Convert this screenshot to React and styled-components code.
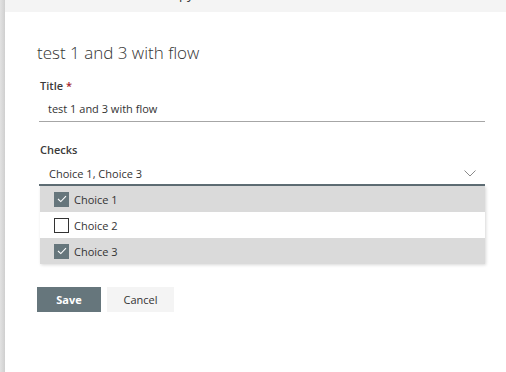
import React from "react"
import styled, { createGlobalStyle } from "styled-components"

const GlobalStyle = createGlobalStyle`
  html, body {
    margin: 0;
    padding: 0;
    background: #e6e6e6;
  }
  body {
    font-family: "Open Sans", "Noto Sans", sans-serif;
    color: #333333;
  }
`

const choices = [
  { label: "Choice 1", checked: true },
  { label: "Choice 2", checked: false },
  { label: "Choice 3", checked: true },
]

export default function App() {
  return (
    <>
      <GlobalStyle />
      <Page>
        <Edge />
        <Panel>
          <Toolbar>
            <ToolItem>Copy link</ToolItem>
          </Toolbar>
          <Body>
            <Heading>test 1 and 3 with flow</Heading>

            <Field>
              <Label>
                Title <Required>*</Required>
              </Label>
              <TextInput>test 1 and 3 with flow</TextInput>
            </Field>

            <Field>
              <Label>Checks</Label>
              <Dropdown>
                <span>Choice 1, Choice 3</span>
                <svg width="12" height="7" viewBox="0 0 12 7">
                  <path d="M0.5 0.5 L6 6 L11.5 0.5" fill="none" stroke="#8a8a8a" strokeWidth="1" />
                </svg>
              </Dropdown>
              <List>
                {choices.map((c) => (
                  <Option key={c.label} selected={c.checked}>
                    <Box checked={c.checked}>
                      {c.checked && (
                        <svg width="10" height="8" viewBox="0 0 10 8">
                          <path d="M1 4 L3.8 6.6 L9 1.2" fill="none" stroke="#ffffff" strokeWidth="1.1" />
                        </svg>
                      )}
                    </Box>
                    {c.label}
                  </Option>
                ))}
              </List>
            </Field>

            <Actions>
              <SaveButton>Save</SaveButton>
              <CancelButton>Cancel</CancelButton>
            </Actions>
          </Body>
        </Panel>
      </Page>
    </>
  )
}

const Page = styled.div`
  display: flex;
  width: 506px;
  height: 372px;
  overflow: hidden;
`

const Edge = styled.div`
  width: 5px;
  flex: none;
  background: linear-gradient(to right, #e2e2e2, #cfcfcf);
`

const Panel = styled.div`
  flex: 1;
  background: #ffffff;
  display: flex;
  flex-direction: column;
`

const Toolbar = styled.div`
  height: 12px;
  background: #f4f4f4;
  overflow: hidden;
  display: flex;
  align-items: flex-end;
  padding-left: 158px;
`

const ToolItem = styled.span`
  font-size: 13px;
  line-height: 18px;
  margin-bottom: 9px;
  color: #333333;
`

const Body = styled.div`
  padding: 29px 21px 0 34px;
  display: flex;
  flex-direction: column;
`

const Heading = styled.h1`
  margin: 0 0 13px -2px;
  font-size: 17px;
  line-height: 24px;
  font-weight: 300;
  color: #333333;
`

const Field = styled.div`
  display: flex;
  flex-direction: column;
  margin-bottom: 20px;
`

const Label = styled.div`
  font-size: 11px;
  line-height: 16px;
  font-weight: 600;
  color: #3a3a3a;
  padding: 0 0 4px 1px;
`

const Required = styled.span`
  color: #a4262c;
`

const TextInput = styled.div`
  height: 23px;
  padding: 0 9px;
  font-size: 11px;
  line-height: 21px;
  border-bottom: 1px solid #a6a6a6;
  color: #333333;
`

const Dropdown = styled.div`
  height: 21px;
  display: flex;
  align-items: center;
  justify-content: space-between;
  padding: 1px 9px 0 10px;
  font-size: 11px;
  color: #333333;
  border-bottom: 2px solid #5f6e75;
`

const List = styled.div`
  display: flex;
  flex-direction: column;
  margin-left: 1px;
  box-shadow: 1px 1px 3px rgba(0, 0, 0, 0.16);
`

const Option = styled.div`
  height: 26px;
  display: flex;
  align-items: center;
  padding-left: 14px;
  gap: 5px;
  font-size: 11px;
  color: #333333;
  background: ${(p) => (p.selected ? "#dadada" : "#ffffff")};
`

const Box = styled.div`
  width: 15px;
  height: 15px;
  box-sizing: border-box;
  display: flex;
  align-items: center;
  justify-content: center;
  border: 1px solid ${(p) => (p.checked ? "#66767c" : "#333333")};
  background: ${(p) => (p.checked ? "#66767c" : "#ffffff")};
`

const Actions = styled.div`
  display: flex;
  gap: 6px;
  margin-top: 3px;
  margin-left: -2px;
`

const Button = styled.button`
  height: 25px;
  border: none;
  font-family: inherit;
  font-size: 11px;
  padding: 0;
  cursor: pointer;
`

const SaveButton = styled(Button)`
  width: 64px;
  background: #66767c;
  color: #ffffff;
  font-weight: 700;
`

const CancelButton = styled(Button)`
  width: 67px;
  background: #f4f4f4;
  color: #333333;
`
